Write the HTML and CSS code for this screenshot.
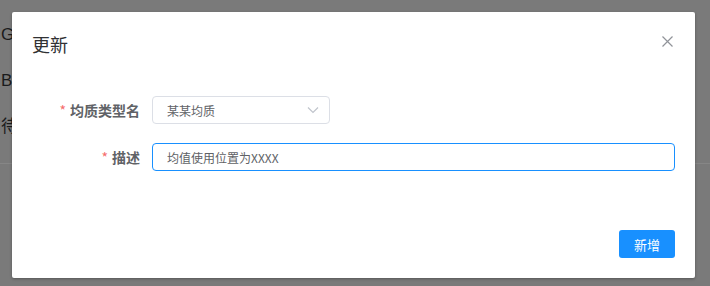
FILE: index.html
```html
<!DOCTYPE html>
<html lang="zh-CN">

<head>
    <meta charset="UTF-8">
    <meta name="viewport" content="width=device-width, initial-scale=1.0">
    <title>更新</title>
    <link rel="stylesheet" href="styles.css">
</head>

<body>
    <div class="page">
        <div class="page__row">Group</div>
        <div class="page__row">Book</div>
        <div class="page__row">待处理</div>
    </div>
    <div class="page__line"></div>

    <div class="mask">
        <div class="dialog">
            <div class="dialog__header">
                <span class="dialog__title">更新</span>
                <button class="dialog__close" aria-label="close">
                    <svg width="11" height="11" viewBox="0 0 11 11">
                        <path d="M0.5 0.5 L10.5 10.5 M10.5 0.5 L0.5 10.5" stroke="#909399" stroke-width="1.2" fill="none" />
                    </svg>
                </button>
            </div>
            <form class="dialog__body form">
                <div class="form__item">
                    <label class="form__label"><i>*</i>均质类型名</label>
                    <div class="select">
                        <span>某某均质</span>
                        <svg width="12" height="8" viewBox="0 0 12 8">
                            <path d="M1 1.5 L6 6.5 L11 1.5" stroke="#c0c4cc" stroke-width="1.2" fill="none" />
                        </svg>
                    </div>
                </div>
                <div class="form__item">
                    <label class="form__label"><i>*</i>描述</label>
                    <input type="text" class="input" value="均值使用位置为XXXX">
                </div>
            </form>
            <div class="dialog__footer">
                <button class="btn">新增</button>
            </div>
        </div>
    </div>
</body>

</html>
```

FILE: styles.css
```css
* {
    margin: 0;
    padding: 0;
    box-sizing: border-box;
}

body {
    width: 710px;
    height: 286px;
    overflow: hidden;
    background: #7a7a7a;
    font-family: "Noto Sans CJK SC", "Liberation Sans", sans-serif;
}

.page {
    width: 12px;
    overflow: hidden;
    padding-top: 24px;
}

.page__row {
    height: 46px;
    padding-left: 1px;
    white-space: nowrap;
    font-family: "Liberation Sans", "Noto Sans CJK SC", sans-serif;
    font-size: 17px;
    line-height: 22px;
    color: #1a1b1c;
}

.page__line {
    margin-top: 1px;
    height: 1px;
    background: #868686;
}

.mask {
    position: absolute;
    top: 0;
    left: 0;
    right: 0;
    bottom: 0;
    padding: 12px 15px 8px 12px;
}

.dialog {
    background: #fff;
    border-radius: 2px;
    box-shadow: 0 1px 3px rgba(0, 0, 0, .3);
}

.dialog__header {
    display: flex;
    justify-content: space-between;
    align-items: center;
    padding: 20px 20px 10px;
}

.dialog__title {
    font-size: 18px;
    line-height: 24px;
    color: #303133;
}

.dialog__close {
    border: none;
    background: none;
    display: flex;
    margin-right: 2px;
    margin-top: -6px;
}

.dialog__body {
    padding: 30px 20px 30px;
}

.form__item {
    display: flex;
    align-items: center;
    margin-bottom: 19px;
}

.form__label {
    width: 120px;
    flex-shrink: 0;
    padding-right: 12px;
    text-align: right;
    font-size: 14px;
    font-weight: bold;
    color: #606266;
    line-height: 28px;
}

.form__label i {
    font-style: normal;
    font-weight: normal;
    color: #f56c6c;
    margin-right: 4px;
}

.select {
    width: 178px;
    height: 28px;
    border: 1px solid #dcdfe6;
    border-radius: 4px;
    display: flex;
    align-items: center;
    justify-content: space-between;
    padding: 0 10px 0 14px;
    font-size: 12px;
    color: #606266;
}

.input {
    flex: 1;
    height: 28px;
    border: 1px solid #1890ff;
    border-radius: 4px;
    outline: none;
    padding: 0 14px;
    font-family: "Noto Sans CJK SC", "Liberation Sans", sans-serif;
    font-size: 12px;
    color: #606266;
}

.dialog__footer {
    display: flex;
    justify-content: flex-end;
    padding: 10px 20px 20px;
}

.btn {
    width: 56px;
    height: 28px;
    border: none;
    border-radius: 3px;
    background: #1890ff;
    color: #fff;
    font-family: "Noto Sans CJK SC", sans-serif;
    font-size: 13px;
}
```
